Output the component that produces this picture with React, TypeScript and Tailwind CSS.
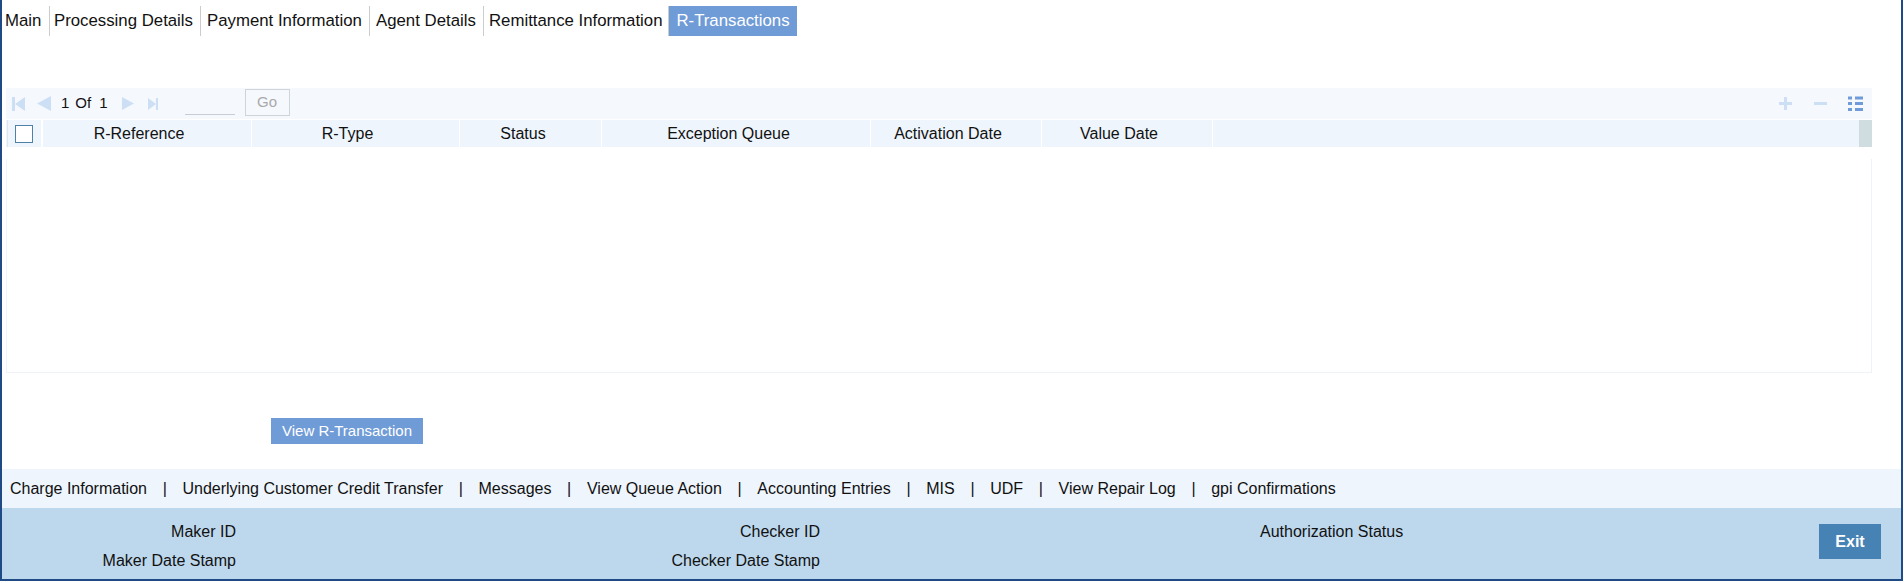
const tabs = [
  { label: "Main", cls: "w-[48px] pl-[3px]" },
  { label: "Processing Details", cls: "w-[151px] pl-[4px]" },
  { label: "Payment Information", cls: "w-[169px] pl-[6px]" },
  { label: "Agent Details", cls: "w-[114px] pl-[6px]" },
  { label: "Remittance Information", cls: "w-[185px] pl-[5px]" },
];

const columns = [
  { label: "R-Reference", cls: "w-[209px] pr-[16px]" },
  { label: "R-Type", cls: "w-[208px] pr-[16px]" },
  { label: "Status", cls: "w-[142px] pr-[15px]" },
  { label: "Exception Queue", cls: "w-[269px] pr-[15px]" },
  { label: "Activation Date", cls: "w-[171px] pr-[16px]" },
  { label: "Value Date", cls: "w-[171px] pr-[16px]" },
];

const links = [
  "Charge Information",
  "Underlying Customer Credit Transfer",
  "Messages",
  "View Queue Action",
  "Accounting Entries",
  "MIS",
  "UDF",
  "View Repair Log",
  "gpi Confirmations",
];

function PagerIcon({ kind }: { kind: "first" | "prev" | "next" | "last" }) {
  const fill = "#cddff4";
  if (kind === "first")
    return (
      <svg width="13" height="14" viewBox="0 0 13 14" className="ml-[6px]">
        <rect x="0" y="0" width="3" height="14" fill={fill} />
        <path d="M13 0V14L3 7Z" fill={fill} />
      </svg>
    );
  if (kind === "prev")
    return (
      <svg width="14" height="15" viewBox="0 0 14 15" className="ml-[12px]">
        <path d="M14 0V15L0 7.5Z" fill={fill} />
      </svg>
    );
  if (kind === "next")
    return (
      <svg width="12" height="13" viewBox="0 0 12 13" className="ml-[14px]">
        <path d="M0 0V13L12 6.5Z" fill={fill} />
      </svg>
    );
  return (
    <svg width="10" height="12" viewBox="0 0 10 12" className="ml-[14px]">
      <path d="M0 0V12L8 6Z" fill={fill} />
      <rect x="8" y="0" width="2" height="12" fill={fill} />
    </svg>
  );
}

function ListIcon() {
  return (
    <svg width="15" height="15" viewBox="0 0 15 15">
      <g fill="#6f9bd8">
        <rect x="0" y="0.5" width="4" height="3" />
        <rect x="7" y="0.5" width="8" height="3" />
        <rect x="0" y="6" width="4" height="3" />
        <rect x="7" y="6" width="8" height="3" />
        <rect x="0" y="12" width="4" height="3" />
        <rect x="7" y="12" width="8" height="3" />
      </g>
    </svg>
  );
}

export default function App() {
  return (
    <div className="h-[581px] w-[1903px] flex flex-col border-x-2 border-b-2 border-[#1f4a85] bg-white text-[16px] text-[#111] font-['Liberation_Sans',Arial,sans-serif]">
      {/* Tabs */}
      <div className="mt-[6px] flex h-[30px] shrink-0">
        {tabs.map((t) => (
          <div
            key={t.label}
            className={`${t.cls} flex items-center border-r border-[#cccccc] text-[16.8px] whitespace-nowrap`}
          >
            {t.label}
          </div>
        ))}
        <div className="flex w-[128px] items-center justify-center bg-[#6f9bd6] text-[16.8px] text-white">
          R-Transactions
        </div>
      </div>

      {/* Grid */}
      <div className="ml-[4px] mt-[52px] w-[1866px] shrink-0">
        <div className="flex h-[31px] items-center bg-[#f5f9fe]">
          <PagerIcon kind="first" />
          <PagerIcon kind="prev" />
          <span className="ml-[10px] text-[15px]">1</span>
          <span className="ml-[6px] text-[15px]">Of</span>
          <span className="ml-[8px] text-[15px]">1</span>
          <PagerIcon kind="next" />
          <PagerIcon kind="last" />
          <div className="ml-[27px] mt-[22px] h-[1px] w-[50px] bg-[#c9ccd2]" />
          <div className="ml-[10px] mt-px flex h-[27px] w-[45px] items-center justify-center self-start border border-[#cfd3da] text-[15px] text-[#a9a9a9]">
            Go
          </div>
          <div className="ml-auto flex items-center">
            <svg width="13" height="13" viewBox="0 0 13 13">
              <path d="M5 0H8V5H13V8H8V13H5V8H0V5H5Z" fill="#cddff4" />
            </svg>
            <svg width="13" height="3" viewBox="0 0 13 3" className="ml-[22px]">
              <rect width="13" height="3" fill="#cddff4" />
            </svg>
            <div className="ml-[21px] mr-[9px] flex">
              <ListIcon />
            </div>
          </div>
        </div>
        <div className="mt-px flex h-[27px] bg-[#eef5fd] pl-px">
          <div className="flex w-[36px] items-center justify-center border-l border-r-2 border-[#dfe5ee] border-r-white">
            <div className="mr-[1px] h-[18px] w-[18px] border border-[#4f81a8] bg-white" />
          </div>
          {columns.map((c) => (
            <div
              key={c.label}
              className={`${c.cls} flex items-center justify-center border-r border-white whitespace-nowrap`}
            >
              {c.label}
            </div>
          ))}
          <div className="ml-auto w-[13px] bg-[#cfdde0]" />
        </div>
        <div className="mt-[12px] h-[214px] border-r border-b border-l border-[#f0f2fa]" />
      </div>

      {/* Action */}
      <div className="ml-[269px] mt-[45px] flex h-[26px] w-[152px] shrink-0 items-center justify-center bg-[#6f9bd6] text-[15px] text-white">
        View R-Transaction
      </div>

      {/* Links */}
      <div className="mt-[25px] flex h-[39px] shrink-0 items-center bg-[#eef5fd] pl-[8px]">
        {links.map((l, i) => (
          <div key={l} className="flex items-center whitespace-nowrap">
            {i > 0 && <span className="w-[35.5px] text-center">|</span>}
            <span>{l}</span>
          </div>
        ))}
      </div>

      {/* Footer */}
      <div className="relative flex min-h-0 flex-1 bg-[#bdd8ed] pt-[15px]">
        <div className="flex w-[234px] flex-col items-end gap-[11px] leading-[18px]">
          <span>Maker ID</span>
          <span>Maker Date Stamp</span>
        </div>
        <div className="ml-[584px] flex w-[0px] flex-col items-end gap-[11px] leading-[18px] whitespace-nowrap">
          <span>Checker ID</span>
          <span>Checker Date Stamp</span>
        </div>
        <div className="ml-[440px] leading-[18px]">Authorization Status</div>
        <div className="ml-auto mr-[20px] mt-[1px] flex h-[35px] w-[62px] items-center justify-center bg-[#4682b4] font-bold text-white">
          Exit
        </div>
      </div>
    </div>
  );
}
